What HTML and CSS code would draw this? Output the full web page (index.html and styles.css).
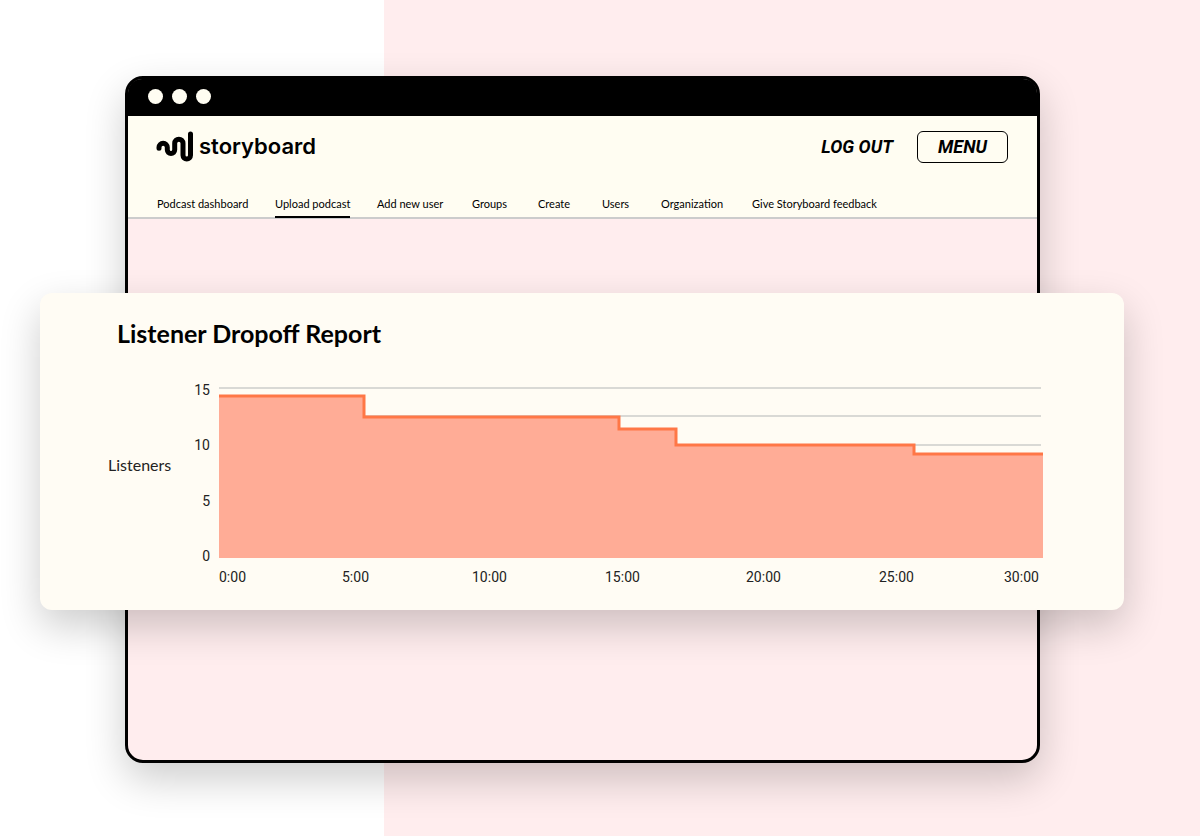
FILE: index.html
```html
<!DOCTYPE html>
<html lang="en">
<head>
<meta charset="utf-8">
<meta name="viewport" content="width=device-width, initial-scale=1">
<title>Storyboard – Listener Dropoff Report</title>
<link rel="stylesheet" href="styles.css">
</head>
<body>
<div class="window">
  <div class="titlebar"><span class="dot"></span><span class="dot"></span><span class="dot"></span></div>
  <header class="header">
    <div class="topbar">
      <a class="brand" href="#">
        <svg class="mark" viewBox="0 0 38 32" width="38" height="32" aria-hidden="true"><path d="M3 17.300V16.350a4.150 4.150 0 0 1 8.300 0V18.800a3.700 3.700 0 0 0 7.400 0V12.300a4.150 4.150 0 0 1 8.300 0V24.300a3.750 3.750 0 0 0 7.500 0V3"/></svg>
        <span class="wordmark">storyboard</span>
      </a>
      <div class="actions">
        <a class="logout" href="#">LOG OUT</a>
        <button class="menu" type="button">MENU</button>
      </div>
    </div>
    <nav class="tabs">
      <a href="#">Podcast dashboard</a>
      <a class="active" href="#" aria-current="page">Upload podcast</a>
      <a href="#">Add new user</a>
      <a href="#">Groups</a>
      <a href="#">Create</a>
      <a href="#">Users</a>
      <a href="#">Organization</a>
      <a href="#">Give Storyboard feedback</a>
    </nav>
  </header>
  <main class="content">
    <section class="card">
      <h1>Listener Dropoff Report</h1>
      <div class="chart">
        <div class="axis-name">Listeners</div>
        <div class="y-axis"><span>15</span><span>10</span><span>5</span><span>0</span></div>
        <svg class="plot" viewBox="0 0 824 172" preserveAspectRatio="none" role="img" aria-label="Listeners over time">
          <path class="grid" d="M0 2H822M0 30H822M0 59H822"/>
          <path class="area" d="M0 10H145V31H400V43H458V59H695V68H824V172H0Z"/>
          <path class="line" d="M0 10H145V31H400V43H457V59H695V68H824"/>
        </svg>
        <div class="x-axis"><span>0:00</span><span>5:00</span><span>10:00</span><span>15:00</span><span>20:00</span><span>25:00</span><span>30:00</span></div>
      </div>
    </section>
  </main>
</div>
</body>
</html>
```
FILE: styles.css
```css
* { box-sizing: border-box; }
body {
  margin: 0;
  min-height: 100vh;
  padding: 76px 160px 73px 125px;
  background: linear-gradient(90deg, #fff 32%, #ffedee 32%);
  font-family: Lato, sans-serif;
  color: #000;
  display: flex;
}
a { color: inherit; text-decoration: none; }
.window {
  flex: 1;
  display: flex;
  flex-direction: column;
  border: 3px solid #000;
  border-radius: 18px;
  background: #ffedee;
  box-shadow: 0 16px 40px rgba(0, 0, 0, .2);
}
.titlebar {
  display: flex;
  align-items: center;
  gap: 9px;
  height: 37px;
  padding: 0 20px 2px;
  background: #000;
  border-radius: 14px 14px 0 0;
}
.dot { width: 15px; height: 15px; border-radius: 50%; background: #fffdf2; }
.header { background: #fffdf2; border-bottom: 2px solid #ccc; }
.topbar {
  display: flex;
  justify-content: space-between;
  align-items: center;
  padding: 15px 29px 0 28px;
}
.brand { display: flex; align-items: center; gap: 5px; }
.mark { fill: none; stroke: #000; stroke-width: 5; stroke-linecap: round; }
.wordmark { padding-bottom: 2px; font: 600 22px/28px Inter, sans-serif; }
.actions { display: flex; align-items: center; gap: 24px; }
.logout, .menu { font: italic 700 18px/28px Roboto, sans-serif; }
.menu {
  width: 91px;
  height: 32px;
  padding: 0;
  border: 1px solid #000;
  border-radius: 6px;
  background: none;
  color: #000;
}
.tabs {
  display: grid;
  grid-template-columns: 118px 102px 95px 66px 64px 59px 91px auto;
  justify-content: start;
  padding: 33px 29px 0;
  font-size: 11px;
  line-height: 16px;
}
.tabs a { justify-self: start; padding-bottom: 4px; white-space: nowrap; }
.tabs .active { border-bottom: 2px solid #000; margin-bottom: -1px; }
.content { padding-top: 74px; }
.card {
  margin: 0 -87px 0 -88px;
  padding: 23px 81px 24px 68px;
  border-radius: 12px;
  background: #fffcf4;
  box-shadow: 0 16px 40px rgba(0, 0, 0, .2);
}
h1 { margin: 0 0 0 9px; font-size: 25px; line-height: 34px; font-weight: 700; }
.chart {
  display: grid;
  grid-template-columns: 66px 45px 1fr;
  grid-template-rows: auto auto;
  padding-top: 31px;
  color: #222;
}
.axis-name { align-self: center; padding-bottom: 10px; font-size: 16px; line-height: 20px; }
.y-axis {
  grid-row: 1 / 3;
  grid-column: 2;
  display: flex;
  flex-direction: column;
  justify-content: space-between;
  align-items: flex-end;
  height: 184px;
  padding-right: 9px;
}
.y-axis, .x-axis { font: 14px/18px Roboto, sans-serif; }
.plot { grid-column: 3; display: block; width: 100%; height: 172px; margin-top: 5px; }
.grid { stroke: #d9d9d5; stroke-width: 2; }
.area { fill: #ffac96; }
.line { fill: none; stroke: #ff7746; stroke-width: 3; }
.x-axis {
  grid-column: 3;
  display: grid;
  grid-template-columns: 123fr 130fr 133fr 141fr 133fr 125fr 39fr;
  padding-top: 10px;
}
```
